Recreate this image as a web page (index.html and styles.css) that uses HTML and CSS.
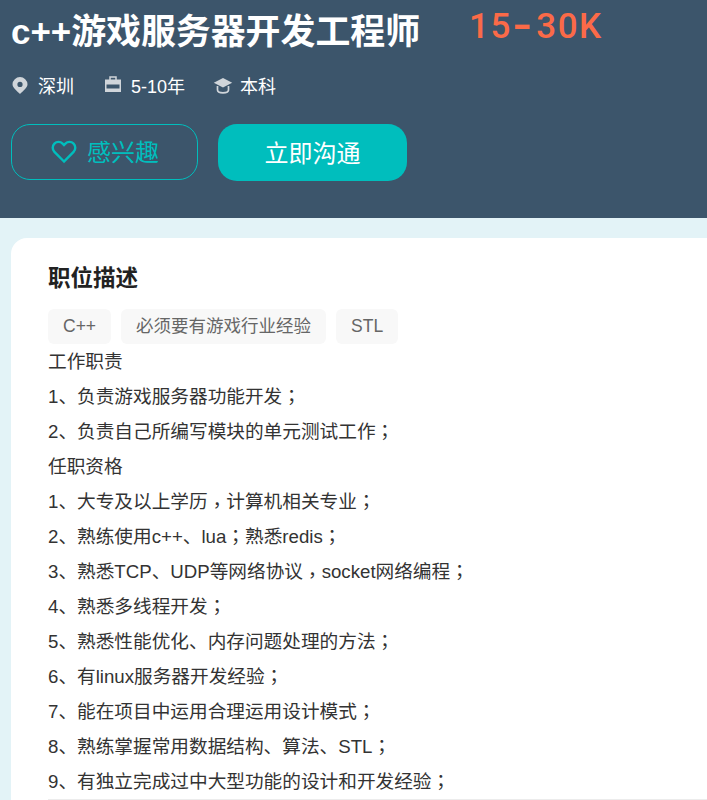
FILE: index.html
```html
<!DOCTYPE html>
<html lang="zh-CN">
<head>
<meta charset="utf-8">
<title>c++游戏服务器开发工程师</title>
<link rel="stylesheet" href="styles.css">
</head>
<body>
<header class="hero">
  <div class="title-row">
    <h1 class="title">c++游戏服务器开发工程师</h1>
    <span class="salary">15<span class="salary-dash">-</span>30K</span>
  </div>
  <div class="meta">
    <span class="meta-item meta-city"><svg class="meta-icon" viewBox="0 0 18 18"><path fill="#d0d5da" fill-rule="evenodd" d="M9 1a7.500 7.500 0 0 0-7.500 7.300C1.500 12 6.600 15.600 9 18c2.400-2.400 7.500-6 7.500-9.700A7.500 7.500 0 0 0 9 1zm0 4.800a2.600 2.600 0 1 1 0 5.200 2.600 2.600 0 0 1 0-5.200z"/></svg>深圳</span>
    <span class="meta-item meta-exp"><svg class="meta-icon" viewBox="0 0 18 18"><path fill="none" stroke="#d0d5da" stroke-width="1.500" d="M6 4V1h6v3M1.750 8v7.250h14.500V8"/><rect fill="#d0d5da" x="1" y="3.500" width="16" height="5"/><rect fill="#d0d5da" x="1" y="12.500" width="16" height="3.500"/></svg>5-10年</span>
    <span class="meta-item"><svg class="meta-icon meta-icon-wide" viewBox="0 0 20 18"><path fill="#d0d5da" d="M10 2 .8 6.800 10 11.500l9.200-4.700z"/><path fill="none" stroke="#d0d5da" stroke-width="1.700" d="M4.500 10v4c0 1.600 2.500 2.800 5.500 2.800s5.500-1.200 5.500-2.800v-4"/></svg>本科</span>
  </div>
  <div class="actions">
    <button class="btn btn-outline"><svg class="heart" viewBox="0 0 26 24"><path fill="none" stroke="#00bebd" stroke-width="2.400" d="M13 21.500 3.400 11.900a6 6 0 0 1 0-8.300 5.800 5.800 0 0 1 8.200 0L13 5l1.400-1.400a5.800 5.800 0 0 1 8.200 0 6 6 0 0 1 0 8.300z"/></svg><span class="btn-label">感兴趣</span></button>
    <button class="btn btn-solid"><span class="btn-label">立即沟通</span></button>
  </div>
</header>
<main class="content">
  <section class="card">
    <h2 class="card-title">职位描述</h2>
    <div class="tags">
      <span class="tag">C++</span>
      <span class="tag">必须要有游戏行业经验</span>
      <span class="tag">STL</span>
    </div>
    <div class="desc">
      <p>工作职责</p>
      <p>1、负责游戏服务器功能开发<span class="mid" lang="zh-TW">；</span></p>
      <p>2、负责自己所编写模块的单元测试工作<span class="mid" lang="zh-TW">；</span></p>
      <p>任职资格</p>
      <p>1、大专及以上学历<span class="mid mid-low" lang="zh-TW">，</span>计算机相关专业<span class="mid" lang="zh-TW">；</span></p>
      <p>2、熟练使用c++、lua<span class="mid" lang="zh-TW">；</span>熟悉redis<span class="mid" lang="zh-TW">；</span></p>
      <p>3、熟悉TCP、UDP等网络协议<span class="mid mid-low" lang="zh-TW">，</span>socket网络编程<span class="mid" lang="zh-TW">；</span></p>
      <p>4、熟悉多线程开发<span class="mid" lang="zh-TW">；</span></p>
      <p>5、熟悉性能优化、内存问题处理的方法<span class="mid" lang="zh-TW">；</span></p>
      <p>6、有linux服务器开发经验<span class="mid" lang="zh-TW">；</span></p>
      <p>7、能在项目中运用合理运用设计模式<span class="mid" lang="zh-TW">；</span></p>
      <p>8、熟练掌握常用数据结构、算法、STL<span class="mid" lang="zh-TW">；</span></p>
      <p>9、有独立完成过中大型功能的设计和开发经验<span class="mid" lang="zh-TW">；</span></p>
    </div>
  </section>
</main>
</body>
</html>
```
FILE: styles.css
```css
* { box-sizing: border-box; }
html, body { margin: 0; padding: 0; height: 800px; overflow: hidden; }
body {
  background: #e3f3f7;
  font-family: "Liberation Sans", "Noto Sans CJK SC", sans-serif;
  color: #333;
}
.hero {
  height: 218px;
  background: #3c556b;
  padding: 0 11px;
  color: #fff;
}
.title-row { display: flex; align-items: flex-start; height: 63px; }
.title {
  margin: 7px 0 0;
  font-size: 34.900px;
  line-height: 50px;
  font-weight: 700;
  white-space: nowrap;
}
.salary {
  margin: 2px 0 0 49px;
  font-family: "Roboto", sans-serif;
  font-size: 35px;
  line-height: 50px;
  font-weight: 500;
  letter-spacing: 1.500px;
  color: #fb6a48;
}
.salary-dash {
  display: inline-block;
  margin: 0 5.500px;
  transform: scale(1.600, 1.300);
}
.meta { display: flex; align-items: center; height: 44px; font-size: 18px; }
.meta-item { display: flex; align-items: center; margin-right: 29px; }
.meta-city { margin-right: 30px; }
.meta-exp { margin-right: 28px; }
.meta-icon { width: 18px; height: 18px; margin-right: 9px; }
.meta-icon-wide { width: 20px; margin-right: 7px; }
.actions { display: flex; gap: 20px; margin-top: 17px; }
.btn {
  display: flex;
  align-items: center;
  justify-content: center;
  font-family: inherit;
  font-size: 24px;
  padding: 0;
  cursor: pointer;
}
.btn-label { padding-bottom: 3px; }
.btn-outline {
  width: 187px;
  height: 56px;
  border: 1px solid #00bebd;
  border-radius: 19px;
  background: transparent;
  color: #00bebd;
}
.heart { width: 26px; height: 24px; margin-right: 10px; margin-left: 1px; }
.btn-solid {
  width: 189px;
  height: 57px;
  border: 0;
  border-radius: 19px;
  background: #00bebd;
  color: #fff;
}
.content { padding: 20px 0 0 11px; }
.card {
  background: #fff;
  border-radius: 16px 0 0 0;
  padding: 23px 0 0 37px;
  height: 562px;
}
.card-title {
  margin: 0;
  font-size: 22.500px;
  line-height: 36px;
  font-weight: 700;
  color: #222;
}
.tags { display: flex; gap: 10px; margin-top: 12px; }
.tag {
  height: 35px;
  line-height: 35px;
  padding: 0 15px;
  background: #f8f8f8;
  border-radius: 6px;
  font-size: 17.500px;
  color: #666;
}
.desc {
  font-size: 18.670px;
  line-height: 35px;
  color: #333;
  border-bottom: 1px solid #ececec;
}
.desc p { margin: 0; height: 35px; white-space: nowrap; }
.mid { font-family: "Noto Sans CJK TC", sans-serif; line-height: 0; }
.mid-low { vertical-align: -4px; }
```
